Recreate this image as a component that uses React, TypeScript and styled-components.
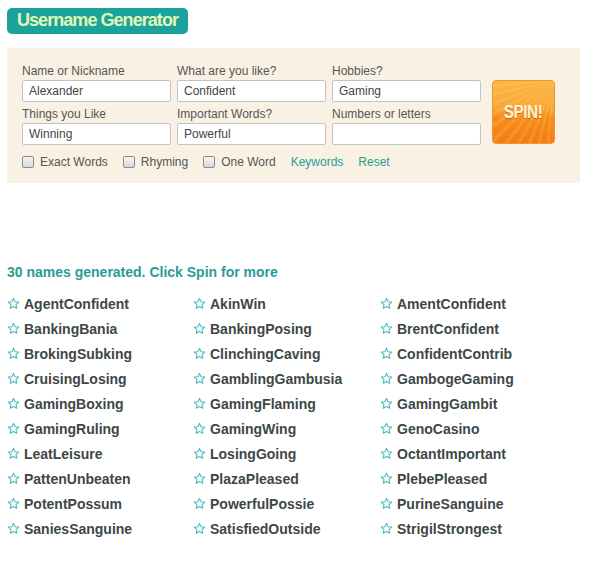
import React from "react";
import styled, { createGlobalStyle } from "styled-components";

const Global = createGlobalStyle`
  html, body { margin: 0; padding: 0; background: #fff; }
  body { font-family: "Liberation Sans", Arial, sans-serif; }
`;

const Page = styled.div`
  width: 592px;
  height: 566px;
  padding: 8px 7px 0 7px;
  box-sizing: border-box;
`;

const TitleBadge = styled.div`
  display: inline-block;
  background: #1aa39d;
  border-radius: 5px;
  padding: 2px 10px 3px 10px;
  height: 21px;
  line-height: 21px;
  font-size: 18px;
  font-weight: bold;
  letter-spacing: -0.95px;
  color: #e0f7b4;
`;

const Panel = styled.div`
  margin-top: 14px;
  width: 573px;
  height: 135px;
  box-sizing: border-box;
  background: #f9f2e4;
  padding: 17px 15px 0 15px;
`;

const FormRow = styled.div`
  display: flex;
  align-items: flex-start;
`;

const Fields = styled.div`
  display: grid;
  grid-template-columns: repeat(3, 149px);
  column-gap: 6px;
  row-gap: 6px;
`;

const Field = styled.div`
  display: flex;
  flex-direction: column;
`;

const Label = styled.label`
  font-size: 12px;
  color: #555;
  height: 15px;
  line-height: 13px;
`;

const Input = styled.input`
  box-sizing: border-box;
  width: 149px;
  height: 22px;
  border: 1px solid #c3c3c3;
  border-radius: 2px;
  background: #fff;
  padding: 0 6px;
  font-family: "Liberation Sans", Arial, sans-serif;
  font-size: 12px;
  color: #444;
  outline: none;
`;

const SpinButton = styled.button`
  margin-left: 11px;
  margin-top: 15px;
  width: 63px;
  height: 64px;
  border: 1px solid #f0962a;
  border-radius: 4px;
  background:
    repeating-conic-gradient(from 200deg at 100% 0%, rgba(255,230,150,0.16) 0deg 3deg, rgba(255,255,255,0) 3deg 8deg),
    linear-gradient(#fbb644 0%, #faa636 45%, #f78d1e 58%, #f57b10 100%);
  color: #fff3d8;
  font-family: "Liberation Sans Narrow", "Liberation Sans", Arial, sans-serif;
  font-size: 19px;
  font-weight: bold;
  letter-spacing: -0.5px;
  text-shadow: 0 1px 1px rgba(170, 80, 0, 0.7);
  padding: 0;
  cursor: pointer;
`;

const SpinText = styled.span`
  display: inline-block;
  transform: scaleX(0.8);
`;

const Options = styled.div`
  display: flex;
  align-items: center;
  margin-top: 10px;
  font-size: 12px;
  color: #555;
`;

const CheckLabel = styled.label`
  display: flex;
  align-items: center;
  margin-right: 15px;
`;

const Box = styled.span`
  display: inline-block;
  width: 10px;
  height: 10px;
  border: 1px solid #8a8a8a;
  border-radius: 2px;
  background: linear-gradient(#f4f4f4, #d8d8d8);
  margin-right: 6px;
`;

const LinkText = styled.a`
  color: #2b9a95;
  text-decoration: none;
  margin-right: 15px;
  cursor: pointer;
`;

const Results = styled.div`
  margin-top: 81px;
`;

const ResultsHeader = styled.div`
  font-size: 14px;
  font-weight: bold;
  color: #2a9b96;
  height: 16px;
  line-height: 16px;
`;

const NameGrid = styled.div`
  margin-top: 15px;
  display: grid;
  grid-template-columns: 186px 187px 200px;
  grid-auto-rows: 25px;
`;

const NameItem = styled.div`
  display: flex;
  align-items: center;
  height: 17px;
  font-size: 14px;
  font-weight: bold;
  color: #3d4747;
`;

const StarIcon = styled.svg`
  width: 13px;
  height: 13px;
  margin-right: 4px;
  flex-shrink: 0;
`;

const Star = () => (
  <StarIcon viewBox="0 0 24 24">
    <path
      d="M12 2.5l2.9 6.3 6.8.7-5.1 4.6 1.5 6.8L12 17.4l-6.1 3.5 1.5-6.8-5.1-4.6 6.8-.7z"
      fill="none"
      stroke="#45bcc0"
      strokeWidth="2"
      strokeLinejoin="round"
    />
  </StarIcon>
);

const names = [
  "AgentConfident", "AkinWin", "AmentConfident",
  "BankingBania", "BankingPosing", "BrentConfident",
  "BrokingSubking", "ClinchingCaving", "ConfidentContrib",
  "CruisingLosing", "GamblingGambusia", "GambogeGaming",
  "GamingBoxing", "GamingFlaming", "GamingGambit",
  "GamingRuling", "GamingWing", "GenoCasino",
  "LeatLeisure", "LosingGoing", "OctantImportant",
  "PattenUnbeaten", "PlazaPleased", "PlebePleased",
  "PotentPossum", "PowerfulPossie", "PurineSanguine",
  "SaniesSanguine", "SatisfiedOutside", "StrigilStrongest",
];

const fields = [
  { label: "Name or Nickname", value: "Alexander" },
  { label: "What are you like?", value: "Confident" },
  { label: "Hobbies?", value: "Gaming" },
  { label: "Things you Like", value: "Winning" },
  { label: "Important Words?", value: "Powerful" },
  { label: "Numbers or letters", value: "" },
];

export default function App() {
  return (
    <Page>
      <Global />
      <TitleBadge>Username Generator</TitleBadge>
      <Panel>
        <FormRow>
          <Fields>
            {fields.map((f) => (
              <Field key={f.label}>
                <Label>{f.label}</Label>
                <Input defaultValue={f.value} />
              </Field>
            ))}
          </Fields>
          <SpinButton>
            <SpinText>SPIN!</SpinText>
          </SpinButton>
        </FormRow>
        <Options>
          <CheckLabel><Box />Exact Words</CheckLabel>
          <CheckLabel><Box />Rhyming</CheckLabel>
          <CheckLabel><Box />One Word</CheckLabel>
          <LinkText>Keywords</LinkText>
          <LinkText>Reset</LinkText>
        </Options>
      </Panel>
      <Results>
        <ResultsHeader>30 names generated. Click Spin for more</ResultsHeader>
        <NameGrid>
          {names.map((n) => (
            <NameItem key={n}>
              <Star />
              {n}
            </NameItem>
          ))}
        </NameGrid>
      </Results>
    </Page>
  );
}
